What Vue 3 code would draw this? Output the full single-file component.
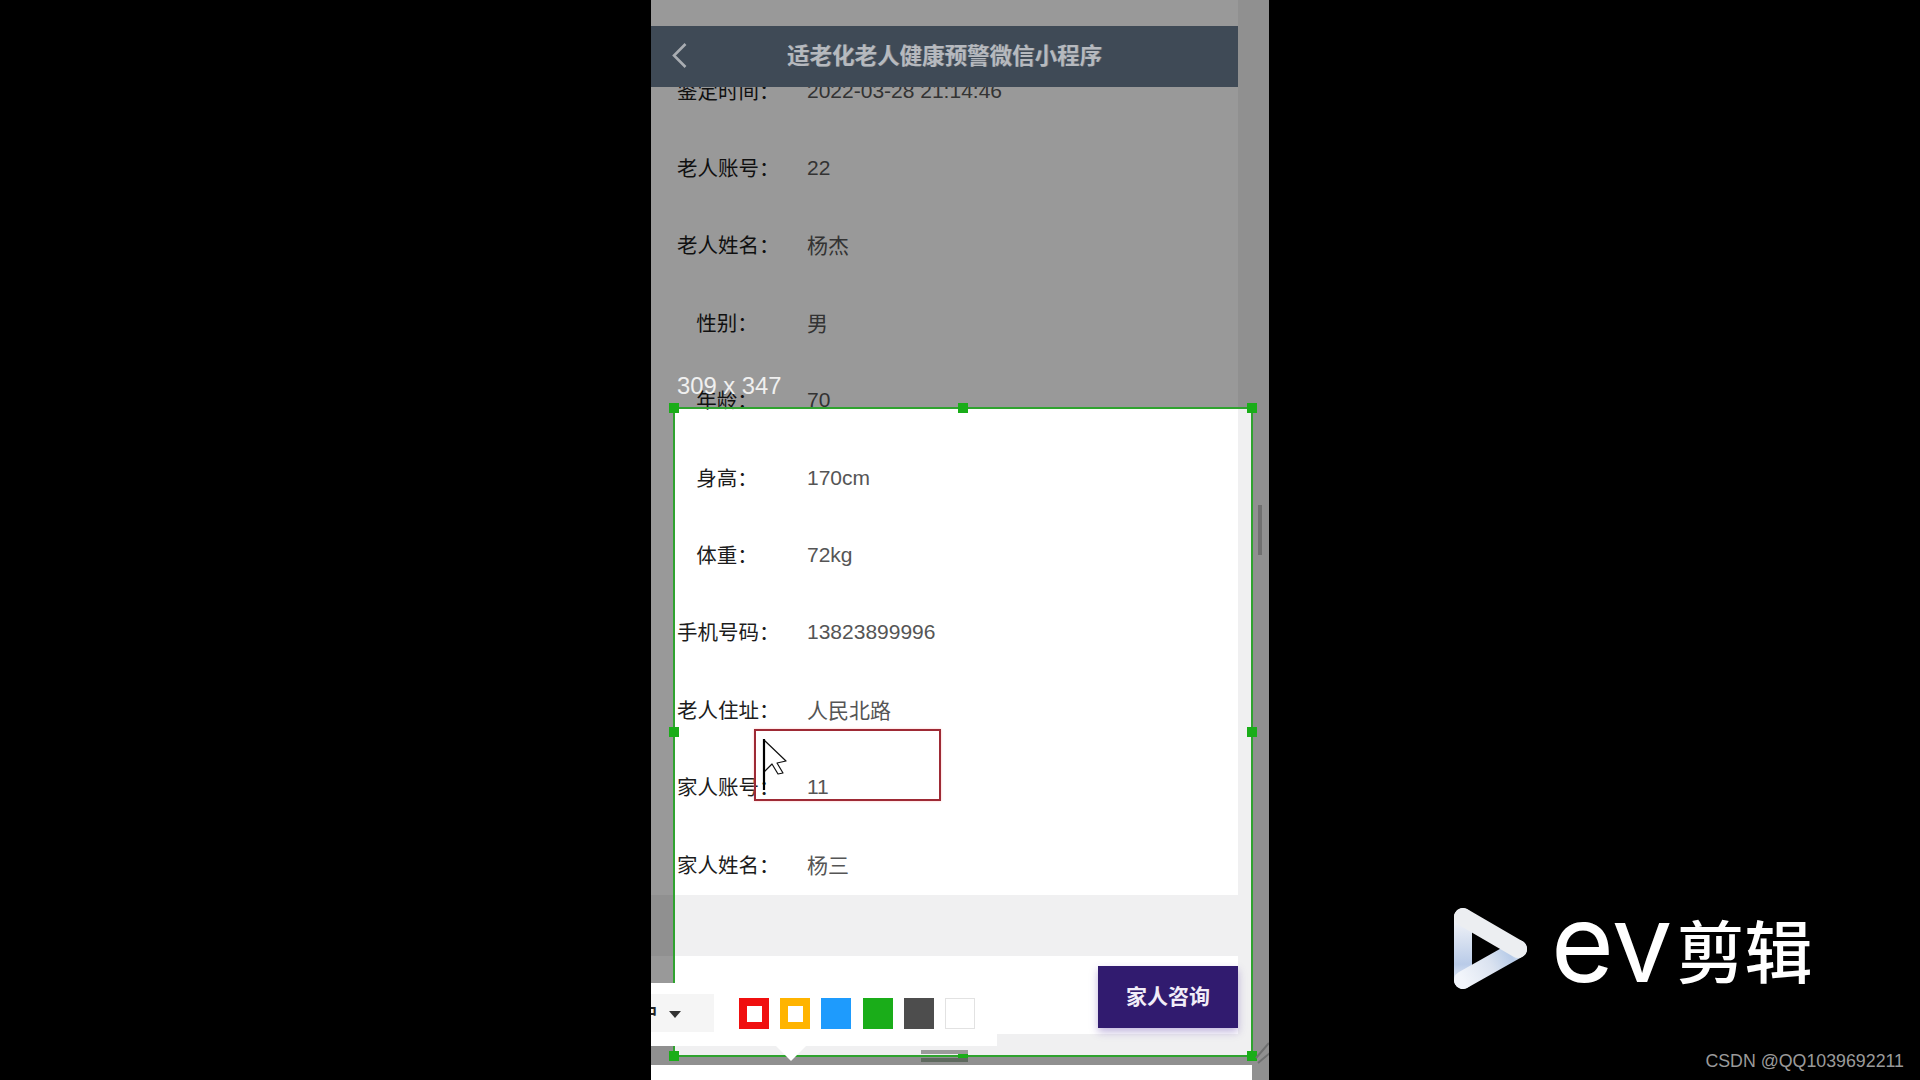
<script setup>
const rows = [
  ['鉴定时间：', '2022-03-28 21:14:46'],
  ['老人账号：', '22'],
  ['老人姓名：', '杨杰'],
  ['性别：', '男'],
  ['年龄：', '70'],
  ['身高：', '170cm'],
  ['体重：', '72kg'],
  ['手机号码：', '13823899996'],
  ['老人住址：', '人民北路'],
  ['家人账号：', '11'],
  ['家人姓名：', '杨三'],
]
const isLatin = (text) => /^[\x00-\x7f]+$/.test(text)
const swatches = [
  { name: 'red', color: '#f00f0f', hollow: true },
  { name: 'yellow', color: '#ffb400', hollow: true },
  { name: 'blue', color: '#1e9bfd' },
  { name: 'green', color: '#1aad19' },
  { name: 'dark', color: '#4d4d4d' },
  { name: 'white', color: '#ffffff' },
]
const handles = ['tl', 'tm', 'tr', 'ml', 'mr', 'bl', 'bm', 'br']
</script>

<template>
  <div class="screen">
    <main class="stage">
      <div class="page">
        <section class="list">
          <div v-for="row in rows" :key="row[0]" class="row">
            <span class="label">{{ row[0] }}</span>
            <span class="value" :class="{ latin: isLatin(row[1]) }">{{ row[1] }}</span>
          </div>
        </section>
        <footer class="bar">
          <button class="consult"><span class="consult-text">家人咨询</span></button>
        </footer>
      </div>

      <header class="head">
        <svg class="back" width="17" height="27" viewBox="0 0 17 27">
          <path d="M14.5 2 L3 13.5 L14.5 25" fill="none" stroke="#a9adb2" stroke-width="2.6" />
        </svg>
        <h1 class="title">适老化老人健康预警微信小程序</h1>
      </header>

      <div class="selection">
        <div class="handles">
          <i v-for="h in handles" :key="h" class="handle" :class="h"></i>
        </div>
      </div>
      <div class="dims">309 x 347</div>
      <div class="desk"></div>
      <div class="drag-top"></div>
      <div class="drag-bottom"></div>

      <div class="tools">
        <div class="size-select">
          <span class="size-text">中</span>
          <i class="caret"></i>
        </div>
        <div class="swatches">
          <div
            v-for="s in swatches"
            :key="s.name"
            class="swatch"
            :class="s.name"
            :style="{ backgroundColor: s.color }"
          >
            <i v-if="s.hollow" class="hole"></i>
          </div>
        </div>
      </div>
      <i class="tools-arrow"></i>

      <div class="redbox"></div>
      <svg class="cursor" width="26" height="54" viewBox="0 0 26 54">
        <path d="M2 2 L24 23 L15 25 L21 35 L16 36 L10 26 L2 34 Z" fill="#fff" stroke="#111" stroke-width="1.2" stroke-linejoin="round" />
        <path d="M2 1 V52" stroke="#000" stroke-width="2.2" fill="none" />
      </svg>
      <i class="scroll"></i>
      <svg class="grip" width="20" height="26" viewBox="0 0 20 26">
        <path d="M3 17 L16 2 M5 22 L18 11" stroke="#6f7070" stroke-width="2" fill="none" />
      </svg>
    </main>

    <aside class="side">
      <div class="logo">
        <svg class="logo-mark" width="73" height="81" viewBox="0 0 73 81">
          <defs>
            <linearGradient id="edgeLeft" gradientUnits="userSpaceOnUse" x1="9" y1="9" x2="9" y2="72">
              <stop offset="0" stop-color="#f4f5f8" />
              <stop offset="0.75" stop-color="#b9cbe8" />
              <stop offset="1" stop-color="#dfe8f5" />
            </linearGradient>
            <linearGradient id="edgeBottom" gradientUnits="userSpaceOnUse" x1="9" y1="72" x2="64" y2="41">
              <stop offset="0" stop-color="#f2f5fb" />
              <stop offset="0.5" stop-color="#dbe3f0" />
              <stop offset="0.85" stop-color="#b7cbe8" />
              <stop offset="1" stop-color="#dfe6f1" />
            </linearGradient>
          </defs>
          <path d="M9 9 V72" stroke="url(#edgeLeft)" stroke-width="18" stroke-linecap="round" fill="none" />
          <path d="M9 72 L64 41" stroke="url(#edgeBottom)" stroke-width="18" stroke-linecap="round" fill="none" />
          <path d="M9 9 L64 41" stroke="#eceef1" stroke-width="18" stroke-linecap="round" fill="none" />
        </svg>
        <span class="logo-ev">ev</span>
        <span class="logo-cn">剪辑</span>
      </div>
      <div class="mark">CSDN @QQ1039692211</div>
    </aside>
  </div>
</template>

<style scoped>
.screen {
  width: 1920px;
  height: 1080px;
  background: #000;
  display: flex;
  padding-left: 651px;
  box-sizing: border-box;
  overflow: hidden;
  font-family: "Liberation Sans", "Noto Sans CJK SC", sans-serif;
}
.stage {
  position: relative;
  width: 618px;
  height: 1080px;
  flex: none;
  overflow: hidden;
  background: #f0f0f1;
}
.page {
  width: 587px;
  height: 1080px;
  display: flex;
  flex-direction: column;
}
.list {
  height: 895px;
  padding-top: 51px;
  box-sizing: border-box;
  overflow: hidden;
  background: #fff;
  flex: none;
}
.row {
  height: 77.4px;
  display: flex;
  align-items: center;
}
.label {
  width: 100px;
  margin-left: 26px;
  flex: none;
  text-align: center;
  font-size: 20.5px;
  color: #1c1c1c;
  white-space: nowrap;
}
.value {
  margin-left: 30px;
  font-size: 21px;
  color: #555;
}
.latin {
  padding-top: 2px;
}
.bar {
  margin-top: 61px;
  height: 78px;
  flex: none;
  background: #fff;
  display: flex;
  justify-content: flex-end;
  padding-top: 10px;
  box-sizing: border-box;
}
.consult {
  width: 140px;
  height: 62px;
  border: 0;
  padding: 0 0 4px;
  background: #311b6f;
  color: #f1edf8;
  font-family: inherit;
  font-size: 21px;
  font-weight: 700;
  box-shadow: 0 4px 8px rgba(80, 50, 160, 0.35);
}
.head {
  position: absolute;
  z-index: 3;
  left: 0;
  top: 26px;
  width: 587px;
  height: 61px;
  background: #3f4a56;
  display: flex;
  align-items: center;
  justify-content: center;
}
.back {
  position: absolute;
  left: 20px;
  top: 16px;
}
.title {
  margin: -5px 0 0;
  font-size: 22.5px;
  font-weight: 700;
  color: #b6b9be;
  text-shadow: 1px 0 0 rgba(182, 185, 190, 0.35);
}
.selection {
  position: absolute;
  z-index: 2;
  left: 22px;
  top: 407px;
  width: 580px;
  height: 650px;
  box-sizing: border-box;
  border: 2px solid #2fa32f;
  box-shadow: 0 0 0 2000px rgba(0, 0, 0, 0.4);
}
.handles {
  position: absolute;
  inset: -1px;
}
.handle {
  position: absolute;
  width: 10px;
  height: 10px;
  background: #1aad19;
  transform: translate(-50%, -50%);
}
.tl { left: 0; top: 0; }
.tm { left: 50%; top: 0; }
.tr { left: 100%; top: 0; }
.ml { left: 0; top: 50%; }
.mr { left: 100%; top: 50%; }
.bl { left: 0; top: 100%; }
.bm { left: 50%; top: 100%; }
.br { left: 100%; top: 100%; }
.dims {
  position: absolute;
  z-index: 3;
  left: 26px;
  top: 372px;
  font-size: 23.8px;
  line-height: 28px;
  color: #f0f0f0;
  white-space: nowrap;
}
.desk {
  position: absolute;
  z-index: 3;
  left: 0;
  top: 1065px;
  width: 601px;
  height: 15px;
  background: #fff;
}
.drag-top,
.drag-bottom {
  position: absolute;
  z-index: 3;
  left: 270px;
  width: 47px;
  height: 4px;
}
.drag-top {
  top: 1050px;
  background: #9a9a9a;
}
.drag-bottom {
  top: 1058px;
  background: #5f6a5f;
}
.tools {
  position: absolute;
  z-index: 3;
  left: 0;
  top: 983px;
  width: 346px;
  height: 63px;
  background: #fff;
  overflow: hidden;
  display: flex;
  padding-top: 11px;
  box-sizing: border-box;
}
.size-select {
  margin-left: -24px;
  width: 87px;
  height: 38px;
  flex: none;
  background: #f5f5f5;
  display: flex;
  align-items: center;
  padding-left: 14px;
  box-sizing: border-box;
}
.size-text {
  width: 16px;
  font-size: 16px;
  line-height: 38px;
  color: #222;
  font-weight: 700;
}
.caret {
  margin-left: 12px;
  margin-top: 2px;
  width: 0;
  height: 0;
  border-left: 6px solid transparent;
  border-right: 6px solid transparent;
  border-top: 7px solid #333;
}
.swatches {
  margin-left: 25px;
  margin-top: 4px;
  display: flex;
  gap: 11.2px;
}
.swatch {
  width: 30px;
  height: 31px;
  display: flex;
  align-items: center;
  justify-content: center;
  box-sizing: border-box;
}
.white {
  border: 1px solid #e2e2e2;
}
.hole {
  width: 15px;
  height: 16px;
  background: #fff;
}
.tools-arrow {
  position: absolute;
  z-index: 4;
  left: 125px;
  top: 1046px;
  width: 0;
  height: 0;
  border-left: 15px solid transparent;
  border-right: 15px solid transparent;
  border-top: 15px solid #fff;
}
.redbox {
  position: absolute;
  z-index: 4;
  left: 103px;
  top: 729px;
  width: 187px;
  height: 72px;
  box-sizing: border-box;
  border: 2px solid #9e2a35;
  box-shadow: 0 0 2px rgba(255, 170, 170, 0.7);
}
.cursor {
  position: absolute;
  z-index: 5;
  left: 111px;
  top: 738px;
}
.scroll {
  position: absolute;
  z-index: 3;
  left: 607px;
  top: 505px;
  width: 4px;
  height: 50px;
  background: #707070;
}
.grip {
  position: absolute;
  z-index: 3;
  left: 602px;
  top: 1041px;
}
.side {
  flex: 1;
  display: flex;
  flex-direction: column;
  padding-top: 908px;
  box-sizing: border-box;
  height: 1080px;
}
.logo {
  margin-left: 185px;
  height: 81px;
  display: flex;
  align-items: center;
  color: #fff;
}
.logo-mark {
  flex: none;
}
.logo-ev {
  margin-left: 24px;
  font-family: Inter, sans-serif;
  font-size: 108px;
  line-height: 81px;
  margin-top: -12px;
  font-weight: 400;
}
.logo-cn {
  margin-left: 4px;
  font-family: "Noto Sans CJK SC", sans-serif;
  font-size: 68px;
  line-height: 81px;
  font-weight: 500;
  white-space: nowrap;
}
.mark {
  align-self: flex-end;
  margin-right: 16px;
  margin-top: 61px;
  font-size: 17.8px;
  line-height: 22px;
  color: #9a9a9a;
  white-space: nowrap;
}
</style>

<style>
html,
body {
  margin: 0;
  background: #000;
  overflow: hidden;
}
</style>
